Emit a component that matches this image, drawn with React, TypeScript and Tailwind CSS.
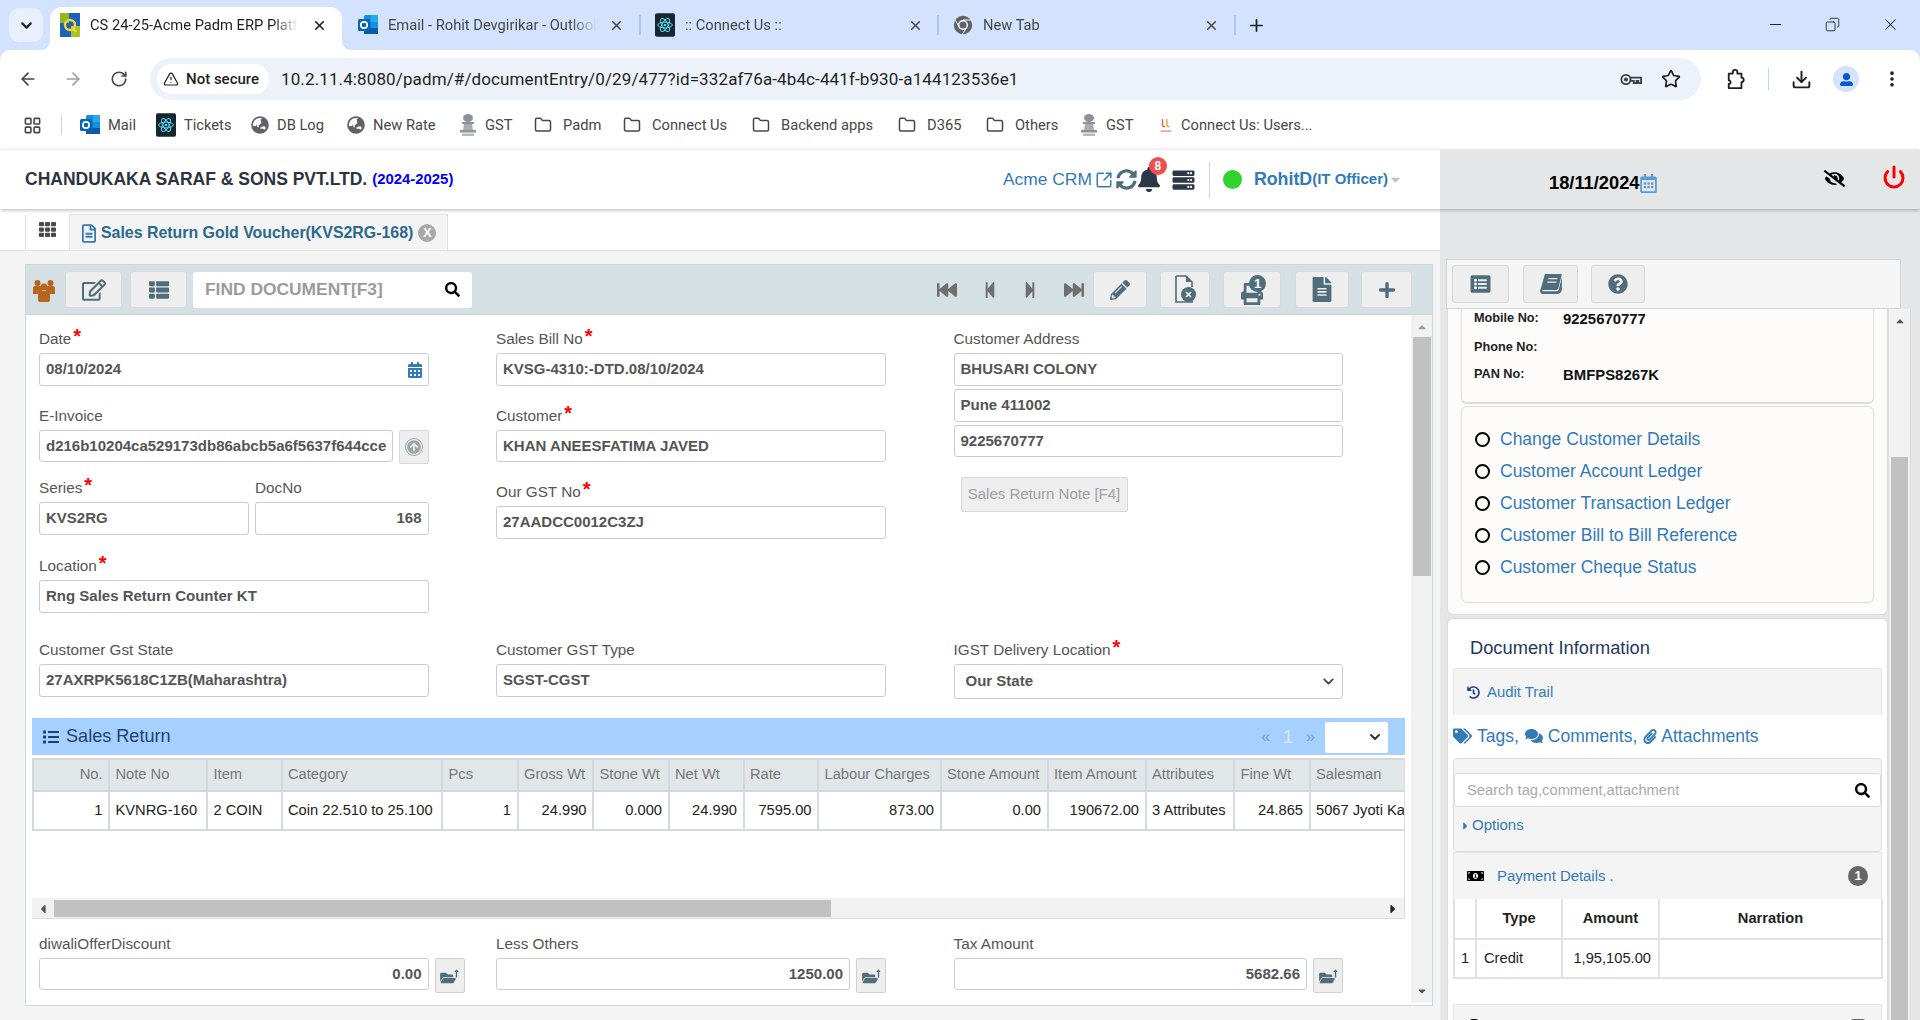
import type { ReactNode } from 'react';
import {
  ArrowLeft, ArrowRight, ChevronDown, Copy, Download, EllipsisVertical, Folder, LayoutGrid, Minus, Plus,
  Power, RotateCw, SquareArrowOutUpRight, Star, TriangleAlert, X,
} from 'lucide-react';
import {
  FaArrowCircleUp, FaBell, FaCalendarAlt, FaCaretDown, FaCaretLeft, FaCaretRight, FaCaretUp, FaComments, FaEyeSlash,
  FaFastBackward, FaFastForward, FaFileAlt, FaFolderOpen, FaGlobeAsia, FaHistory, FaList, FaListAlt, FaLongArrowAltUp,
  FaMoneyBillAlt, FaPaperclip, FaPencilAlt, FaPlus, FaPrint, FaQuestionCircle, FaRegCalendarAlt, FaRegEdit,
  FaRegFileAlt, FaSearch, FaServer, FaStepBackward, FaStepForward, FaSyncAlt, FaTags, FaTh, FaThList, FaUserAlt,
} from 'react-icons/fa';

const OutlookIcon = () => (
  <svg viewBox="0 0 20 24" className="w-[20px] h-[24px] shrink-0">
    <rect x="6" y="2" width="14" height="19" rx="1.5" fill="#1490df" />
    <rect x="13" y="2" width="7" height="7" fill="#28a8ea" />
    <rect x="6" y="9" width="7" height="6" fill="#0f78d4" />
    <path d="M6 15h14v6H6z" fill="#0a5aa8" />
    <rect x="0" y="6" width="12" height="12" rx="1.5" fill="#0a64b5" />
    <circle cx="6" cy="12" r="3.2" fill="none" stroke="#fff" strokeWidth="1.7" />
  </svg>
);

const ReactIcon = () => (
  <svg viewBox="0 0 22 26" className="w-[20px] h-[24px] shrink-0">
    <rect width="22" height="26" rx="2" fill="#14272e" />
    <g fill="none" stroke="#5ed3ee" strokeWidth="1.1">
      <ellipse cx="11" cy="13" rx="8" ry="3.2" />
      <ellipse cx="11" cy="13" rx="8" ry="3.2" transform="rotate(60 11 13)" />
      <ellipse cx="11" cy="13" rx="8" ry="3.2" transform="rotate(120 11 13)" />
    </g>
    <circle cx="11" cy="13" r="1.5" fill="#5ed3ee" />
  </svg>
);

const PadmIcon = () => (
  <svg viewBox="0 0 20 24" className="w-[20px] h-[24px] shrink-0">
    <rect width="20" height="24" fill="#1b63b8" />
    <rect x="0" y="0" width="9" height="10" fill="#90b81e" />
    <rect x="11" y="13" width="9" height="11" fill="#a6c423" />
    <circle cx="10" cy="12" r="5" fill="none" stroke="#f3d23c" strokeWidth="2.4" />
    <path d="M12 14l4 5" stroke="#f3d23c" strokeWidth="2.4" />
  </svg>
);

const ChromeGray = () => (
  <svg viewBox="0 0 24 24" className="w-[20px] h-[20px] shrink-0">
    <circle cx="12" cy="12" r="11" fill="#5f6368" />
    <circle cx="12" cy="12" r="6" fill="#fff" />
    <circle cx="12" cy="12" r="4.3" fill="#5f6368" />
    <path d="M12 6h10M8 15.5L3 6.5M16 15.5l-5 8" stroke="#fff" strokeWidth="1.2" />
  </svg>
);

const EmblemIcon = () => (
  <svg viewBox="0 0 18 24" className="w-[18px] h-[24px] shrink-0" fill="#8d9297">
    <ellipse cx="9" cy="5" rx="5" ry="4" />
    <rect x="3" y="9" width="12" height="2" />
    <path d="M5 11h8l1 6H4z" fill="#a9adb1" />
    <rect x="1" y="17" width="16" height="2.5" />
    <rect x="3" y="20.5" width="12" height="2.5" fill="#b4b7bb" />
  </svg>
);

const ConnectLogo = () => (
  <svg viewBox="0 0 16 20" className="w-[14px] h-[20px] shrink-0" fill="none">
    <path d="M4 3v6a3 3 0 0 0 3 3" stroke="#e8632b" strokeWidth="1.5" />
    <path d="M9 3v6a3 3 0 0 0 3 3" stroke="#e9a23a" strokeWidth="1.5" />
    <path d="M2 17h12" stroke="#ef8f7c" strokeWidth="1.6" />
  </svg>
);

const KeyIcon = () => (
  <svg viewBox="0 0 24 16" className="w-[22px] h-[15px]" fill="none" stroke="#3c4043" strokeWidth="2">
    <circle cx="6.5" cy="8" r="5" />
    <circle cx="6.5" cy="8" r="1.2" fill="#3c4043" />
    <path d="M11.5 6H23v6h-3V9.5h-2V12h-3V9.5h-3.500" />
  </svg>
);

const ExtensionIcon = () => (
  <svg viewBox="0 0 22 24" className="w-[20px] h-[22px]" fill="none" stroke="#1f1f1f" strokeWidth="2" strokeLinejoin="round">
    <path d="M3 6h4.500V4.500a2.500 2.500 0 0 1 5 0V6H17v4.500a2.500 2.500 0 0 1 0 5V22H3v-4.500a2 2 0 0 0 0-4V6z" />
  </svg>
);

const UsersIcon = () => (
  <svg viewBox="0 0 22 24" className="h-[24px] w-[22px]" fill="#b5651d">
    <circle cx="4.500" cy="5" r="3" />
    <circle cx="17.500" cy="5" r="3" />
    <path d="M0 10c0-1.200 1-2 2-2h5c1 0 2 1 2 2v6H0zM13 10c0-1.200 1-2 2-2h5c1 0 2 1 2 2v6h-9z" />
    <circle cx="11" cy="9" r="3.500" />
    <path d="M5 17c0-2.500 1.500-4 4-4h4c2.500 0 4 1.500 4 4v5c0 1-1 2-2 2H7c-1 0-2-1-2-2z" />
  </svg>
);

const BookIcon = () => (
  <svg viewBox="0 0 24 22" className="w-[22px] h-[20px]" fill="#4f6d7a">
    <path d="M7 0h16c.8 0 1 .6.8 1.200L20 16c-.3 1-1 1.500-2 1.500H3.500c-1 0-1.500 1-.6 1.400H18c1.200 0 2-.4 2.500-1.600L24 3.500V17c-.5 2.600-2.500 5-5 5H3c-2.200 0-3.500-2-2.800-4L5 1.500C5.300.5 6 0 7 0z" />
    <path d="M9 5h10M8 9h10" stroke="#f0f0f0" strokeWidth="1.4" />
  </svg>
);

const FileXIcon = () => (
  <svg viewBox="0 0 22 30" className="w-[22px] h-[30px]">
    <path d="M2 1h10l6 6v5M18 24v3H2V1" fill="none" stroke="#4f6d7a" strokeWidth="1.6" />
    <path d="M12 1v6h6" fill="#4f6d7a" />
    <circle cx="14.500" cy="19.500" r="7.500" fill="#4f6d7a" />
    <path d="M12 17l5 5M17 17l-5 5" stroke="#fff" strokeWidth="1.6" />
  </svg>
);

const tabs = [
  { title: 'Email - Rohit Devgirikar - Outlook', icon: <OutlookIcon />, box: 'w-[299px] pl-[16px]', text: 'w-[208px]' },
  { title: ':: Connect Us ::', icon: <ReactIcon />, box: 'w-[298px] pl-[14px]', text: 'w-[210px]' },
  { title: 'New Tab', icon: <ChromeGray />, box: 'w-[297px] pl-[14px]', text: 'w-[208px]' },
];

function BrowserTabs() {
  return (
    <div className="flex h-[50px] items-end text-[14.7px] text-[#444746]">
      <div className="ml-[9px] mb-[8px] flex h-[34px] w-[34px] items-center justify-center rounded-[10px] bg-[#e8f0fe]">
        <ChevronDown className="h-[17px] w-[17px] text-[#1f1f1f]" strokeWidth={3} />
      </div>
      <div className="relative ml-[7px] flex h-[43px] w-[292px] items-center rounded-t-[12px] bg-white pb-[7px] pl-[10px] text-[#1f1f1f]">
        <span className="absolute -left-[10px] bottom-0 h-[10px] w-[10px] bg-[radial-gradient(circle_at_0_0,#d3e3fd_10px,#fff_10.5px)]" />
        <span className="absolute -right-[10px] bottom-0 h-[10px] w-[10px] bg-[radial-gradient(circle_at_100%_0,#d3e3fd_10px,#fff_10.5px)]" />
        <PadmIcon />
        <span className="ml-[10px] w-[208px] overflow-hidden whitespace-nowrap [mask-image:linear-gradient(90deg,#000_88%,transparent)]">CS 24-25-Acme Padm ERP Platform</span>
        <X className="ml-[14px] h-[15px] w-[15px]" strokeWidth={2.6} />
      </div>
      {tabs.map(t => (
        <div key={t.title} className={`flex h-[43px] items-center pb-[7px] ${t.box}`}>
          {t.icon}
          <span className={`ml-[10px] overflow-hidden whitespace-nowrap [mask-image:linear-gradient(90deg,#000_88%,transparent)] ${t.text}`}>{t.title}</span>
          <X className="ml-[13px] h-[15px] w-[15px]" strokeWidth={2.4} />
          <span className="ml-auto h-[20px] w-[2px] bg-[#a8c7fa]" />
        </div>
      ))}
      <Plus className="mb-[15px] ml-[11px] h-[19px] w-[19px] text-[#1f1f1f]" strokeWidth={2.2} />
      <div className="mb-[16px] ml-auto flex items-center gap-[41px] pr-[20px] text-[#1f1f1f]">
        <Minus className="h-[17px] w-[17px]" strokeWidth={1.4} />
        <Copy className="h-[15px] w-[15px] -scale-x-100" strokeWidth={1.4} />
        <X className="h-[19px] w-[19px]" strokeWidth={1.3} />
      </div>
    </div>
  );
}

function AddressBar() {
  return (
    <div className="flex h-[50px] items-center rounded-t-[10px] bg-white pl-[18px] pt-[8px] text-[#474747]">
      <ArrowLeft className="h-[20px] w-[20px]" strokeWidth={2} />
      <ArrowRight className="ml-[25px] h-[20px] w-[20px] text-[#9aa0a6]" strokeWidth={2} />
      <RotateCw className="ml-[27px] h-[18px] w-[18px]" strokeWidth={2.2} />
      <div className="ml-[22px] flex h-[42px] w-[1551px] items-center rounded-full bg-[#edf2fa] pl-[7px]">
        <div className="flex h-[30px] w-[112px] items-center gap-[7px] rounded-full bg-white pl-[6px]">
          <TriangleAlert className="h-[16px] w-[16px] text-[#1f1f1f]" strokeWidth={1.8} />
          <span className="font-['Roboto',sans-serif] text-[15px] font-medium text-[#1f1f1f]">Not secure</span>
        </div>
        <span className="ml-[12px] pt-[1px] font-['Roboto',sans-serif] text-[17px] tracking-[0.12px] text-[#1f1f1f]">10.2.11.4:8080/padm/#/documentEntry/0/29/477?id=332af76a-4b4c-441f-b930-a144123536e1</span>
        <div className="ml-auto flex items-center gap-[19px] pr-[20px]">
          <KeyIcon />
          <Star className="h-[20px] w-[20px] text-[#1f1f1f]" strokeWidth={2} />
        </div>
      </div>
      <div className="ml-[25px]"><ExtensionIcon /></div>
      <span className="ml-[22px] h-[22px] w-[1px] bg-[#c7d3e8]" />
      <Download className="ml-[22px] h-[21px] w-[21px] text-[#1f1f1f]" strokeWidth={2.2} />
      <div className="ml-[21px] flex h-[26px] w-[26px] items-center justify-center rounded-full bg-[#d3e3fd]">
        <FaUserAlt className="h-[13px] w-[13px] text-[#0b57d0]" />
      </div>
      <EllipsisVertical className="ml-[23px] h-[20px] w-[20px] text-[#1f1f1f]" strokeWidth={2.4} />
    </div>
  );
}

const FolderIcon = () => <Folder className="mr-[2px] h-[18px] w-[20px] shrink-0 text-[#474747]" strokeWidth={2} />;
const GlobeIcon = () => <FaGlobeAsia className="h-[18px] w-[18px] shrink-0 text-[#5f6368]" />;

const bookmarks: { label: string; icon: ReactNode; w: string }[] = [
  { label: 'Mail', icon: <OutlookIcon />, w: 'w-[76px]' },
  { label: 'Tickets', icon: <ReactIcon />, w: 'w-[95px]' },
  { label: 'DB Log', icon: <GlobeIcon />, w: 'w-[96px]' },
  { label: 'New Rate', icon: <GlobeIcon />, w: 'w-[112px]' },
  { label: 'GST', icon: <EmblemIcon />, w: 'w-[74px]' },
  { label: 'Padm', icon: <FolderIcon />, w: 'w-[89px]' },
  { label: 'Connect Us', icon: <FolderIcon />, w: 'w-[129px]' },
  { label: 'Backend apps', icon: <FolderIcon />, w: 'w-[146px]' },
  { label: 'D365', icon: <FolderIcon />, w: 'w-[88px]' },
  { label: 'Others', icon: <FolderIcon />, w: 'w-[95px]' },
  { label: 'GST', icon: <EmblemIcon />, w: 'w-[79px]' },
  { label: 'Connect Us: Users...', icon: <ConnectLogo />, w: 'w-[170px]' },
];

function Bookmarks() {
  return (
    <div className="flex h-[50px] items-center bg-white pl-[23px] text-[14.7px] text-[#474747]">
      <LayoutGrid className="h-[19px] w-[19px]" strokeWidth={2} />
      <span className="ml-[19px] mr-[18px] h-[20px] w-[1px] bg-[#c7d3e8]" />
      {bookmarks.map((b, i) => (
        <div key={i} className={`flex items-center gap-[8px] ${b.w}`}>
          {b.icon}
          <span className="whitespace-nowrap">{b.label}</span>
        </div>
      ))}
    </div>
  );
}

function Header() {
  return (
    <div className="relative z-10 flex h-[59px] shadow-[0_1px_4px_rgba(0,0,0,0.3)]">
      <div className="flex w-[1440px] items-center bg-white pl-[25px]">
        <span className="text-[17.5px] font-bold text-[#2d3340]">CHANDUKAKA SARAF &amp; SONS PVT.LTD.</span>
        <span className="ml-[5px] text-[14.9px] font-bold text-[#0000ff]">(2024-2025)</span>
        <span className="ml-auto text-[17.4px] text-[#337ab7]">Acme CRM</span>
        <SquareArrowOutUpRight className="ml-[3px] h-[18px] w-[18px] text-[#337ab7]" strokeWidth={2} />
        <FaSyncAlt className="ml-[3px] h-[21px] w-[21px] text-[#4f6d7a]" />
        <div className="relative ml-[1px]">
          <FaBell className="h-[25px] w-[22px] text-[#2d3748]" />
          <span className="absolute -right-[7px] -top-[10px] flex h-[18px] w-[18px] items-center justify-center rounded-full bg-[#ef4f4f] text-[12px] font-bold text-white">8</span>
        </div>
        <FaServer className="ml-[12px] h-[22px] w-[23px] text-[#2d3748]" />
        <span className="ml-[14px] h-[36px] w-[1px] bg-[#d5d5d5]" />
        <span className="ml-[13px] h-[19px] w-[19px] rounded-full bg-[#30d230]" />
        <span className="ml-[12px] text-[17.8px] font-bold text-[#337ab7]">RohitD</span>
        <span className="text-[15px] font-bold text-[#337ab7]">(IT Officer)</span>
        <FaCaretDown className="mr-[37px] h-[15px] w-[15px] text-[#c4c4c4]" />
      </div>
      <div className="flex w-[480px] items-center bg-[#e5e6e8] pl-[109px]">
        <span className="mt-[7px] text-[18.3px] font-bold text-black">18/11/2024</span>
        <FaRegCalendarAlt className="mt-[7px] h-[19px] w-[17px] text-[#5b9bd5]" />
        <FaEyeSlash className="mb-[2px] ml-[166px] h-[17px] w-[23px] text-black" />
        <Power className="mb-[5px] ml-[36px] h-[24px] w-[24px] text-[#ff0000]" strokeWidth={3} />
      </div>
    </div>
  );
}

const Btn = ({ children, className = '' }: { children: ReactNode; className?: string }) => (
  <div className={`flex h-[37px] items-center justify-center rounded-[3px] border border-[#d8d8d8] bg-[#eeeeee] text-[#4f6d7a] ${className}`}>{children}</div>
);

function PanelToolbar() {
  return (
    <div className="flex h-[50px] shrink-0 items-center border-b border-[#ccd6c9] bg-[#d5e0e5] pl-[7px] pr-[20px]">
      <UsersIcon />
      <Btn className="ml-[10px] w-[57px]"><FaRegEdit className="h-[22px] w-[24px]" /></Btn>
      <Btn className="ml-[8px] w-[57px]"><FaThList className="h-[20px] w-[24px]" /></Btn>
      <div className="ml-[6px] flex h-[36px] w-[279px] items-center justify-between rounded-[3px] bg-white pl-[12px] pr-[12px]">
        <span className="whitespace-nowrap text-[17.4px] font-bold text-[#9b9b9b]">FIND DOCUMENT[F3]</span>
        <FaSearch className="h-[15px] w-[15px] text-black" />
      </div>
      <FaFastBackward preserveAspectRatio="none" className="ml-auto h-[18px] w-[20px] text-[#6f6f6f]" />
      <FaStepBackward preserveAspectRatio="none" className="ml-[27px] h-[18px] w-[12px] text-[#6f6f6f]" />
      <FaStepForward preserveAspectRatio="none" className="ml-[28px] h-[18px] w-[12px] text-[#6f6f6f]" />
      <FaFastForward preserveAspectRatio="none" className="ml-[28px] h-[18px] w-[20px] text-[#6f6f6f]" />
      <Btn className="ml-[9px] w-[54px]"><FaPencilAlt className="h-[20px] w-[20px]" /></Btn>
      <Btn className="ml-[13px] w-[50px]"><FileXIcon /></Btn>
      <Btn className="relative ml-[13px] w-[58px]">
        <FaPrint className="mt-[8px] h-[22px] w-[22px]" />
        <span className="absolute left-[25px] top-[3px] flex h-[17px] w-[17px] items-center justify-center rounded-full bg-[#4f6d7a] text-[13px] font-bold text-white">1</span>
      </Btn>
      <Btn className="ml-[14px] w-[54px]"><FaFileAlt className="h-[25px] w-[20px]" /></Btn>
      <Btn className="ml-[12px] w-[51px]"><FaPlus className="h-[18px] w-[18px]" /></Btn>
    </div>
  );
}

const Label = ({ children, req, className = '' }: { children: ReactNode; req?: boolean; className?: string }) => (
  <div className={`mb-[4px] flex h-[20px] items-center whitespace-nowrap text-[15.3px] text-[#555] ${className}`}>
    {children}
    {req && <span className="mb-[6px] ml-[2px] text-[20px] leading-none font-bold text-[#ff0000]">*</span>}
  </div>
);

const Box = ({ children, right, h = 'h-[33px]', className = '' }: { children?: ReactNode; right?: boolean; h?: string; className?: string }) => (
  <div className={`flex items-center overflow-hidden whitespace-nowrap rounded-[3px] border border-[#ccc] bg-white px-[6px] text-[15px] font-bold text-[#555] ${h} ${right ? 'justify-end' : ''} ${className}`}>
    {children}
  </div>
);

const OpenBtn = () => (
  <div className="flex h-[35px] w-[30px] shrink-0 items-center justify-center rounded-[2px] border border-[#d0d0d0] bg-[#eeeeee] pt-[5px] text-[#4f6d7a]">
    <FaFolderOpen className="h-[14px] w-[16px]" />
    <FaLongArrowAltUp className="-ml-[2px] mb-[10px] h-[9px] w-[5px]" />
  </div>
);

const threeCols = 'grid grid-cols-[389.5px_390px_389.5px] gap-x-[67.5px]';

function FormFields() {
  return (
    <div className="ml-[13px] w-[1306px] pt-[14px]">
      <div className={threeCols}>
        <div>
          <Label req>Date</Label>
          <Box className="justify-between">
            08/10/2024
            <FaCalendarAlt className="h-[16px] w-[14px] text-[#337ab7]" />
          </Box>
          <Label className="mt-[20px]">E-Invoice</Label>
          <div className="flex items-start gap-[6px]">
            <Box h="h-[32px]" className="w-[354px]">d216b10204ca529173db86abcb5a6f5637f644cce</Box>
            <div className="flex h-[34px] w-[30px] items-center justify-center rounded-[2px] border border-[#d8d8d8] bg-[#eeeeee]">
              <span className="flex h-[18px] w-[18px] items-center justify-center rounded-full border border-[#9aa5aa]">
                <FaArrowCircleUp className="h-[14px] w-[14px] text-[#9aa5aa]" />
              </span>
            </div>
          </div>
          <div className="mt-[14px] flex gap-[6px]">
            <div className="w-[210px]">
              <Label req>Series</Label>
              <Box>KVS2RG</Box>
            </div>
            <div className="flex-1">
              <Label>DocNo</Label>
              <Box right>168</Box>
            </div>
          </div>
          <Label req className="mt-[21px]">Location</Label>
          <Box>Rng Sales Return Counter KT</Box>
        </div>
        <div>
          <Label req>Sales Bill No</Label>
          <Box>KVSG-4310:-DTD.08/10/2024</Box>
          <Label req className="mt-[20px]">Customer</Label>
          <Box h="h-[32px]">KHAN ANEESFATIMA JAVED</Box>
          <Label req className="mt-[20px]">Our GST No</Label>
          <Box>27AADCC0012C3ZJ</Box>
        </div>
        <div>
          <Label>Customer Address</Label>
          <Box>BHUSARI COLONY</Box>
          <Box className="mt-[3px]">Pune 411002</Box>
          <Box h="h-[32px]" className="mt-[3px]">9225670777</Box>
          <div className="ml-[7px] mt-[20px] flex h-[35px] w-[167px] items-center justify-center rounded-[2px] border border-[#d8d8d8] bg-[#eeeeee] text-[15px] text-[#9aa0a3]">
            Sales Return Note [F4]
          </div>
        </div>
      </div>
      <div className={`mt-[27px] ${threeCols}`}>
        <div>
          <Label>Customer Gst State</Label>
          <Box>27AXRPK5618C1ZB(Maharashtra)</Box>
        </div>
        <div>
          <Label>Customer GST Type</Label>
          <Box>SGST-CGST</Box>
        </div>
        <div>
          <Label req>IGST Delivery Location</Label>
          <Box h="h-[35px]" className="justify-between pl-[11px] pr-[5px]">
            Our State
            <ChevronDown className="h-[17px] w-[17px] text-[#444]" strokeWidth={2.6} />
          </Box>
        </div>
      </div>
    </div>
  );
}

const columns = [
  { head: 'No.', val: '1', w: 'w-[76px]', right: true, headRight: true },
  { head: 'Note No', val: 'KVNRG-160', w: 'w-[98px]' },
  { head: 'Item', val: '2 COIN', w: 'w-[74.5px]' },
  { head: 'Category', val: 'Coin 22.510 to 25.100', w: 'w-[160.5px]' },
  { head: 'Pcs', val: '1', w: 'w-[75.5px]', right: true },
  { head: 'Gross Wt', val: '24.990', w: 'w-[75.5px]', right: true },
  { head: 'Stone Wt', val: '0.000', w: 'w-[75.5px]', right: true },
  { head: 'Net Wt', val: '24.990', w: 'w-[75px]', right: true },
  { head: 'Rate', val: '7595.00', w: 'w-[74.5px]', right: true },
  { head: 'Labour Charges', val: '873.00', w: 'w-[122.5px]', right: true },
  { head: 'Stone Amount', val: '0.00', w: 'w-[107px]', right: true },
  { head: 'Item Amount', val: '190672.00', w: 'w-[98px]', right: true },
  { head: 'Attributes', val: '3 Attributes', w: 'w-[88.5px]' },
  { head: 'Fine Wt', val: '24.865', w: 'w-[75.5px]', right: true },
  { head: 'Salesman', val: '5067 Jyoti Kale', w: 'w-[96.5px]' },
];

function SalesReturn() {
  return (
    <div className="ml-[6px] mt-[19px] w-[1373px]">
      <div className="flex h-[37px] items-center bg-[#a6d0ff] pl-[10px] pr-[17px] pt-[1px] text-[#1f3f70]">
        <FaList className="h-[16px] w-[18px]" />
        <span className="ml-[6px] text-[18.1px]">Sales Return</span>
        <span className="ml-auto text-[16px] text-[#7d9cc4]">«</span>
        <span className="ml-[13px] text-[18px] text-[#d7e8ff]">1</span>
        <span className="ml-[13px] text-[16px] text-[#7d9cc4]">»</span>
        <div className="ml-[10px] flex h-[31px] w-[63px] items-center justify-end rounded-[2px] bg-white pr-[5px]">
          <ChevronDown className="h-[16px] w-[16px] text-[#333]" strokeWidth={3} />
        </div>
      </div>
      <div className="mt-[3px] h-[161px] overflow-hidden border-b border-r border-[#ddd]">
        <div className="h-[140px] overflow-hidden">
          <table className="w-[1373px] table-fixed border-collapse text-[14.7px]">
            <colgroup>
              {columns.map(c => <col key={c.head} className={c.w} />)}
            </colgroup>
            <thead>
              <tr className="h-[32px] bg-[#e1e6e8] text-[#777]">
                {columns.map(c => (
                  <th key={c.head} className={`overflow-hidden whitespace-nowrap border-2 border-[#d2d8db] px-[5.5px] pb-[1px] font-normal ${c.headRight ? 'text-right' : 'text-left'}`}>{c.head}</th>
                ))}
              </tr>
            </thead>
            <tbody>
              <tr className="h-[39px] bg-white text-[#222]">
                {columns.map(c => (
                  <td key={c.head} className={`overflow-hidden whitespace-nowrap border-2 border-[#d6dadc] px-[5.5px] ${c.right ? 'text-right' : 'text-left'}`}>{c.val}</td>
                ))}
              </tr>
            </tbody>
          </table>
        </div>
        <div className="flex h-[21px] items-center bg-[#f1f1f1] text-[#555]">
          <FaCaretLeft className="ml-[7px] h-[14px] w-[8px]" />
          <div className="ml-[7px] h-[17px] w-[777px] bg-[#c1c1c1]" />
          <FaCaretRight className="ml-auto mr-[7px] h-[14px] w-[8px] text-[#222]" />
        </div>
      </div>
    </div>
  );
}

function OtherCharges() {
  const items = [
    { label: 'diwaliOfferDiscount', val: '0.00', w: 'w-[389.5px] shrink-0' },
    { label: 'Less Others', val: '1250.00', w: 'w-[354px]' },
    { label: 'Tax Amount', val: '5682.66', w: 'w-[354px]' },
  ];
  return (
    <div className={`ml-[13px] mt-[15px] w-[1306px] ${threeCols}`}>
      {items.map(it => (
        <div key={it.label}>
          <Label>{it.label}</Label>
          <div className="flex items-start gap-[6px]">
            <Box right h="h-[32px]" className={it.w}>{it.val}</Box>
            <OpenBtn />
          </div>
        </div>
      ))}
    </div>
  );
}

function LeftColumn() {
  return (
    <div className="flex w-[1440px] flex-col">
      <div className="flex h-[42px] shrink-0 items-end border-b border-[#e2e2e2] bg-white pl-[25px]">
        <div className="flex h-[35px] w-[44px] items-start justify-center border-l border-[#e2e2e2] pt-[6px]">
          <FaTh className="h-[17px] w-[19px] text-[#4a4a4a]" />
        </div>
        <div className="flex h-[36px] w-[379px] items-center border border-b-0 border-[#e2e2e2] bg-[#f4f4f4] pl-[12px] pt-[1px]">
          <FaRegFileAlt className="h-[19px] w-[14px] text-[#337ab7]" />
          <span className="ml-[5px] whitespace-nowrap text-[15.9px] font-bold text-[#2b6a8c]">Sales Return Gold Voucher(KVS2RG-168)</span>
          <span className="ml-[5px] flex h-[18px] w-[18px] items-center justify-center rounded-full bg-[#a9a9a9] text-[13px] font-bold text-white">X</span>
        </div>
      </div>
      <div className="min-h-0 flex-1 bg-[#f4f4f4] pl-[25px] pt-[13px]">
        <div className="flex h-[742px] w-[1408px] flex-col border border-[#cdd6da] bg-white">
          <PanelToolbar />
          <div className="flex h-[688px] shrink-0">
            <div className="w-[1385px] overflow-hidden">
              <FormFields />
              <SalesReturn />
              <OtherCharges />
            </div>
            <div className="flex w-[21px] flex-col items-center bg-[#f1f1f1] text-[#555]">
              <FaCaretUp className="mt-[6px] h-[12px] w-[12px] text-[#999]" />
              <div className="mt-[4px] h-[239px] w-[18px] bg-[#c1c1c1]" />
              <FaCaretDown className="mb-[6px] mt-auto h-[12px] w-[12px]" />
            </div>
          </div>
        </div>
      </div>
    </div>
  );
}

function CustomerInfo() {
  return (
    <div className="rounded-b-[6px] border-x border-b border-[#ddd] bg-[#fdfcfb] px-[13px] pb-[11px]">
      <div className="h-[95px] rounded-b-[6px] border-x border-b-2 border-[#ddd] pl-[12px] text-[12.7px] font-bold text-[#222]">
        <div className="flex h-[20px] items-center">
          <span className="w-[89px]">Mobile No:</span>
          <span className="text-[14.9px] text-[#111]">9225670777</span>
        </div>
        <div className="mt-[9px] flex h-[20px] items-center">
          <span className="w-[89px]">Phone No:</span>
        </div>
        <div className="mt-[7px] flex h-[20px] items-center">
          <span className="w-[89px]">PAN No:</span>
          <span className="text-[14.9px] text-[#111]">BMFPS8267K</span>
        </div>
      </div>
      <div className="mt-[2px] h-[197px] rounded-[6px] border border-[#ddd] pl-[13px] pt-[16px] text-[17.5px] text-[#337ab7]">
        {['Change Customer Details', 'Customer Account Ledger', 'Customer Transaction Ledger', 'Customer Bill to Bill Reference', 'Customer Cheque Status'].map(l => (
          <div key={l} className="flex h-[32px] items-center">
            <span className="h-[15px] w-[15px] rounded-full border-[2.5px] border-black" />
            <span className="ml-[10px]">{l}</span>
          </div>
        ))}
      </div>
    </div>
  );
}

function DocumentInfo() {
  return (
    <div className="mt-[3px] rounded-t-[6px] border-x border-t border-[#ddd] bg-white pl-[5px] pr-[5px]">
      <div className="flex h-[49px] items-center pl-[17px] pt-[8px] text-[18.3px] text-[#23395d]">Document Information</div>
      <div className="flex h-[47px] items-center rounded-t-[3px] border-x border-t border-[#e4e4e4] bg-[#f4f4f4] pl-[13px] text-[14.9px] text-[#337ab7]">
        <FaHistory className="h-[13px] w-[13px] text-[#1f3f8f]" />
        <span className="ml-[7px]">Audit Trail</span>
      </div>
      <div className="flex h-[43px] items-center pb-[1px] text-[17.5px] text-[#337ab7]">
        <FaTags className="h-[18px] w-[19px]" />
        <span className="ml-[5px]">Tags,</span>
        <FaComments className="ml-[6px] h-[16px] w-[18px]" />
        <span className="ml-[5px]">Comments,</span>
        <FaPaperclip className="ml-[6px] h-[15px] w-[14px]" />
        <span className="ml-[4px]">Attachments</span>
      </div>
      <div className="h-[94px] rounded-[4px] border border-[#ddd] bg-[#f4f4f4] pt-[14px]">
        <div className="flex h-[34px] items-center justify-between rounded-[3px] border border-[#ddd] bg-white pl-[12px] pr-[10px] text-[14.7px] text-[#aaa]">
          Search tag,comment,attachment
          <FaSearch className="h-[15px] w-[15px] text-black" />
        </div>
        <div className="flex h-[37px] items-center pl-[8px] text-[15px] text-[#337ab7]">
          <FaCaretRight className="h-[12px] w-[7px]" />
          <span className="ml-[3px]">Options</span>
        </div>
      </div>
      <div className="flex h-[47px] items-center border-x border-t border-[#e4e4e4] bg-[#f4f4f4] pl-[13px] pr-[13px] text-[14.9px] text-[#337ab7]">
        <FaMoneyBillAlt className="h-[16px] w-[17px] text-black" />
        <span className="ml-[13px]">Payment Details .</span>
        <span className="ml-auto flex h-[20px] w-[20px] items-center justify-center rounded-full bg-[#666] text-[13px] font-bold text-white">1</span>
      </div>
      <table className="w-[430px] table-fixed border-collapse text-[14.7px] text-[#222]">
        <colgroup>
          <col className="w-[22px]" />
          <col className="w-[86px]" />
          <col className="w-[97px]" />
          <col />
        </colgroup>
        <thead>
          <tr className="h-[40px] font-bold">
            <th className="border-2 border-t-0 border-[#e2e2e2]" />
            <th className="border-2 border-t-0 border-[#e2e2e2]">Type</th>
            <th className="border-2 border-t-0 border-[#e2e2e2]">Amount</th>
            <th className="border-2 border-t-0 border-[#e2e2e2]">Narration</th>
          </tr>
        </thead>
        <tbody>
          <tr className="h-[39px]">
            <td className="border-2 border-[#e2e2e2] text-center">1</td>
            <td className="border-2 border-[#e2e2e2] pl-[7px]">Credit</td>
            <td className="border-2 border-[#e2e2e2] pr-[7px] text-right">1,95,105.00</td>
            <td className="border-2 border-[#e2e2e2]" />
          </tr>
        </tbody>
      </table>
      <div className="mt-[25px] flex h-[30px] justify-between border-x border-t border-[#e4e4e4] bg-[#f4f4f4] pl-[13px] pr-[13px] pt-[14px]">
        <span className="h-[6px] w-[14px] rounded-t-full bg-black" />
        <span className="h-[6px] w-[20px] rounded-t-full bg-[#666]" />
      </div>
    </div>
  );
}

function RightColumn() {
  return (
    <div className="flex w-[480px] flex-col bg-[#e5e6e8] pl-[6px] pt-[50px]">
      <div className="flex h-[50px] w-[455px] shrink-0 items-center border border-[#d2d4d6] bg-[#f5f5f5] pl-[5px]">
        <Btn className="h-[38px] w-[57px]"><FaListAlt className="h-[20px] w-[23px]" /></Btn>
        <Btn className="ml-[14px] h-[38px] w-[55px]"><BookIcon /></Btn>
        <Btn className="ml-[13px] h-[38px] w-[54px]"><FaQuestionCircle className="h-[20px] w-[20px]" /></Btn>
      </div>
      <div className="flex min-h-0 flex-1 overflow-hidden pl-[1px]">
        <div className="w-[441px] shrink-0">
          <CustomerInfo />
          <DocumentInfo />
        </div>
        <div className="flex w-[23px] flex-col items-center border-x border-[#ddd] bg-[#f1f1f1]">
          <FaCaretUp className="mt-[6px] h-[12px] w-[12px] text-[#555]" />
          <div className="mt-[130px] w-[17px] flex-1 bg-[#c1c1c1]" />
        </div>
      </div>
    </div>
  );
}

export default function App() {
  return (
    <div className="h-[1020px] w-[1920px] overflow-hidden bg-white font-['Liberation_Sans',Arial,sans-serif]">
      <div className="bg-[#d3e3fd] font-['Roboto',sans-serif]">
        <BrowserTabs />
        <AddressBar />
        <Bookmarks />
      </div>
      <Header />
      <div className="flex h-[811px]">
        <LeftColumn />
        <RightColumn />
      </div>
    </div>
  );
}
